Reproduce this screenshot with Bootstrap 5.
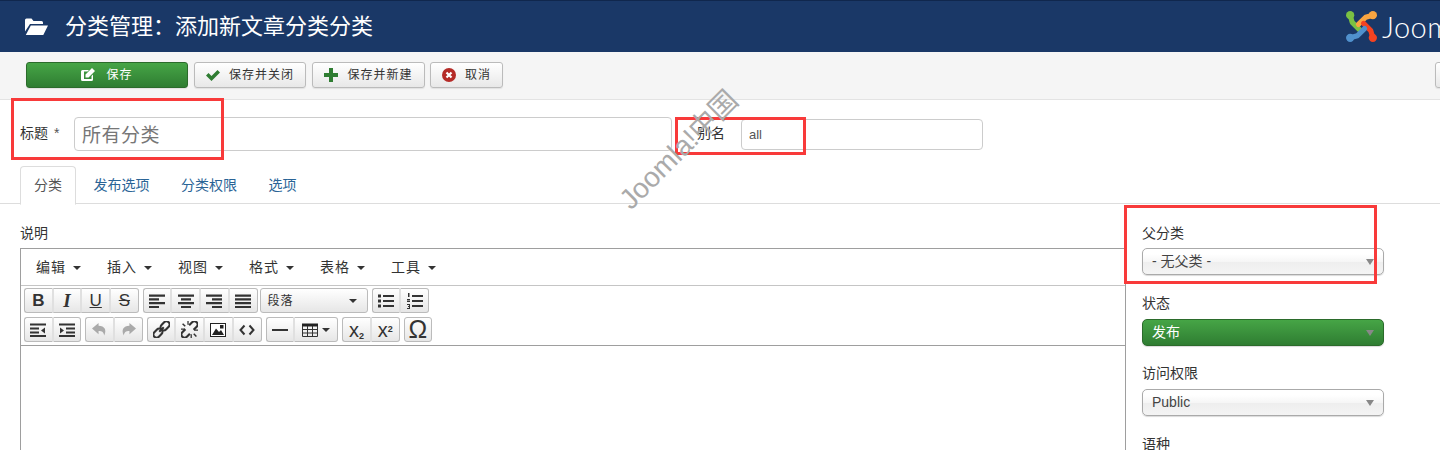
<!DOCTYPE html>
<html lang="zh-CN">
  <head>
    <meta charset="UTF-8" />
    <meta name="viewport" content="width=device-width, initial-scale=1.0" />
    <link rel="stylesheet" href="https://cdn.jsdelivr.net/npm/bootstrap@5.3.0/dist/css/bootstrap.min.css" />
    <title>分类管理</title>
    <style>
      html, body { height: 450px; overflow: hidden; }
      body {
        position: relative;
        font-family: "Liberation Sans", "Noto Sans CJK SC", sans-serif;
        font-size: 14px;
        color: #333;
        background: #fff;
      }
      .top-head { height: 52px; background: #1a3867; border-top: 1px solid #10274d; color: #fff; overflow: hidden; }
      .top-head h1 { font-size: 22px; font-weight: 400; margin: 0 0 0 17px; line-height: 52px; }
      .folder-ico { margin-left: 25px; margin-bottom: 1px; }
      .brand-txt { font-family: Lato, sans-serif; font-weight: 300; font-size: 29px; margin-left: 4px; letter-spacing: .5px; }
      .logo-box { margin-left: auto; width: 95px; flex: none; white-space: nowrap; }
      .tool-row { height: 48px; background: #f5f5f5; border-bottom: 1px solid #e3e3e3; padding: 10px 0 0 26px; overflow: hidden; }
      .tool-btn {
        flex: none; height: 26px; padding: 0; font-size: 12px; letter-spacing: 1px; color: #333;
        display: inline-flex; align-items: center; justify-content: center; gap: 9px;
        background: linear-gradient(#fff, #e8e8e8); border: 1px solid #bbb; border-radius: 3px;
        box-shadow: 0 1px 1px rgba(0,0,0,.08);
      }
      .tool-save { width: 162px; color: #fff; background: linear-gradient(#46a546, #2f7d32); border-color: #2b6b2b; margin-right: 6px; gap: 11px; }
      .tool-close { width: 112px; margin-right: 6px; }
      .tool-new { width: 113px; margin-right: 5px; }
      .tool-cancel { width: 73px; }
      .tool-edge { width: 30px; margin-left: 932px; }
      .title-row { padding: 17px 0 0 20px; height: 51px; }
      .title-lbl { width: 54px; margin-bottom: 2px; }
      .title-lbl i { font-style: normal; color: #555; margin-left: 2px; }
      .title-inp { width: 598px; height: 34px; font-size: 19px; letter-spacing: .5px; padding: 0 7px 2px; border-color: #ccc; border-radius: 4px; color: #777; }
      .alias-lbl { margin-left: 25px; width: 44px; margin-bottom: 2px; }
      .alias-inp { width: 242px; height: 31px; font-size: 13px; padding: 0 7px; border-color: #ccc; border-radius: 4px; color: #555; }
      .tab-bar { margin-top: 15px; padding-left: 20px; height: 38px; border-bottom-color: #ddd; }
      .tab-bar .nav-link { padding: 8px 13px; height: 39px; font-size: 14px; line-height: 20px; color: #2a6496; margin-right: 3.5px; border-radius: 4px 4px 0 0; }
      .tab-bar .nav-link.active { color: #555; border-color: #ddd #ddd #fff; }
      .edit-col { width: 1126px; flex: none; padding: 20px 0 0 20px; }
      .side-col { padding: 20px 0 0 16px; width: 258px; flex: none; }
      .fld-lbl { display: block; margin-bottom: 7px; line-height: 18px; height: 18px; }
      .edit-col .fld-lbl, .side-col .fld-lbl:first-child { margin-bottom: 6px; }
      .editor-box { border: 1px solid #9e9e9e; border-bottom: 0; height: 260px; }
      .menu-row { height: 37px; border-bottom: 1px solid #c5c5c5; padding-left: 15px; }
      .menu-item { width: 71px; line-height: 37px; white-space: nowrap; letter-spacing: 1px; }
      .caret-mark { display: inline-block; border: 4px solid transparent; border-top-color: #333; border-bottom: 0; margin-left: 2px; vertical-align: 2px; }
      .mce-rows { height: 60px; border-bottom: 1px solid #9e9e9e; padding: 2px 0 0 3px; }
      .mce-line { height: 25px; margin-bottom: 4px; gap: 4px; }
      .mce-grp { height: 25px; }
      .mce-grp > .btn {
        width: 28.7px; height: 25px; padding: 0; display: flex; align-items: center; justify-content: center;
        background: linear-gradient(#fff, #e6e6e6); border: 1px solid #bbb; border-radius: 3px; color: #333;
        font-size: 17px; line-height: 1;
      }
      .mce-grp.mce-grp > .btn.btn:not(:first-child) { margin-left: 0; border-left-color: #e0e0e0; }
      .mce-grp > .btn:not(:last-child) { border-right-color: #e0e0e0; }
      .mce-tight { margin-right: -2px; }
      .mce-b { font-weight: 700; }
      .mce-i { font: italic 700 19px "Liberation Serif", serif; }
      .mce-u { text-decoration: underline; }
      .mce-s { text-decoration: line-through; }
      .mce-grp > .mce-format { width: 108px; justify-content: space-between; padding: 0 10px 0 7px; font-size: 12px; letter-spacing: 1px; }
      .mce-grp > .mce-table { width: 44px; gap: 4px; }
      .mce-grp > .mce-x { font-size: 20px; }
      .mce-x sub, .mce-x sup { font-size: 9px; font-weight: 700; }
      .mce-grp > .mce-omega { font-size: 25px; }
      .side-select { display: block; position: relative; height: 27px; margin-bottom: 19px; width: 242px; }
      .side-select::after { content: ""; position: absolute; right: 10px; top: 11px; border: 4px solid transparent; border-top: 6px solid #888; border-bottom: 0; pointer-events: none; }
      .side-select select {
        display: block; width: 100%; height: 27px; padding: 0 9px; font-size: 14px; color: #444;
        appearance: none; border: 1px solid #aaa; border-radius: 5px;
        background: linear-gradient(#fff 20%, #f6f6f6 50%, #eee 52%, #f4f4f4);
        box-shadow: 0 1px 1px rgba(0,0,0,.15);
      }
      .side-select.is-green { margin-bottom: 18px; }
      .side-select.is-green select { color: #fff; background: linear-gradient(#46a546, #2f7d32); border-color: #2b6b2b; }
      .red-mark { position: absolute; border: 3px solid #f83a3a; pointer-events: none; }
      .red-title { left: 11px; top: 98px; width: 213px; height: 62px; }
      .red-alias { left: 675px; top: 117px; width: 131px; height: 38px; }
      .red-parent { left: 1124px; top: 205px; width: 253px; height: 79px; }
      .water-mark {
        position: absolute; left: 679px; top: 150px; transform: translate(-50%, -50%) rotate(-45deg);
        font-size: 28px; color: #aaa; white-space: nowrap; pointer-events: none; line-height: 1;
      }
    </style>
  </head>
  <body>
    <svg width="0" height="0" class="position-absolute">
      <defs>
        <symbol id="al" viewBox="0 0 16 16"><path d="M0 1.500h16v2.200H0zM0 5.300h10v2.200H0zM0 9.100h16v2.200H0zM0 12.900h10v2.200H0z" /></symbol>
        <symbol id="ac" viewBox="0 0 16 16"><path d="M0 1.500h16v2.200H0zM3 5.300h10v2.200H3zM0 9.100h16v2.200H0zM3 12.900h10v2.200H3z" /></symbol>
        <symbol id="ar" viewBox="0 0 16 16"><path d="M0 1.500h16v2.200H0zM6 5.300h10v2.200H6zM0 9.100h16v2.200H0zM6 12.900h10v2.200H6z" /></symbol>
        <symbol id="aj" viewBox="0 0 16 16"><path d="M0 1.500h16v2.200H0zM0 5.300h16v2.200H0zM0 9.100h16v2.200H0zM0 12.900h16v2.200H0z" /></symbol>
        <symbol id="ul" viewBox="0 0 16 16"><path d="M5 2h11v2H5zM5 7h11v2H5zM5 12h11v2H5zM0 1.500h3v3H0zM0 6.500h3v3H0zM0 11.500h3v3H0z" /></symbol>
        <symbol id="ol" viewBox="0 0 16 16"><path d="M5 2h11v2H5zM5 7h11v2H5zM5 12h11v2H5zM1 0h1.500v4H1zM0 6h3v1.500H1.500V8H3v1H0V7.500h1.500V7H0zM0 11h3v5H0v-1h2v-1H1v-1h1v-1H0z" /></symbol>
        <symbol id="od" viewBox="0 0 16 16"><path d="M0 1.500h16v2H0zM0 5.500h9v2H0zM0 9.500h9v2H0zM0 13h16v2H0zM15 5.500v6l-4-3z" /></symbol>
        <symbol id="id" viewBox="0 0 16 16"><path d="M0 1.500h16v2H0zM7 5.500h9v2H7zM7 9.500h9v2H7zM0 13h16v2H0zM1 5.500v6l4-3z" /></symbol>
        <symbol id="un" viewBox="0 0 16 16"><path d="M7 1 0 7l7 6V9.500c4 0 5.500 1.500 6 5 3-6 .5-10.500-6-10.500z" /></symbol>
        <symbol id="re" viewBox="0 0 16 16"><path d="M9 1l7 6-7 6V9.500c-4 0-5.500 1.500-6 5C0 8.500 2.500 4 9 4z" /></symbol>
        <symbol id="lk" viewBox="0 0 16 16"><g fill="none" stroke="currentColor" stroke-width="2" transform="rotate(-45 8 8)"><rect x="-1.500" y="5" width="9.500" height="6" rx="3" /><rect x="8" y="5" width="9.500" height="6" rx="3" /><path d="M5 8h6" /></g></symbol>
        <symbol id="ulk" viewBox="0 0 16 16"><g fill="none" stroke="currentColor" stroke-width="2" transform="rotate(-45 8 8)"><path d="M5.500 5h-4a3 3 0 0 0 0 6h4" /><path d="M10.500 5h4a3 3 0 0 1 0 6h-4" /></g><path d="M1 3l1-1 2.500 2.500-1 1zM11.500 12.500l1-1 2.500 2.500-1 1zM0 7h3.500v1.200H0zM12.500 8h3.500v1.200h-3.500zM6 0h1.200v3.500H6zM9 12.500h1.200V16H9z" /></symbol>
        <symbol id="im" viewBox="0 0 16 16"><path fill="#222" d="M0 1h16v14H0z" /><path fill="#fff" d="M1 2h14v12H1z" /><path fill="#222" d="M2 13l4-6.500 3 3.500 2-2 3 5zM10 3h3.500v3.500H10z" /></symbol>
        <symbol id="cd" viewBox="0 0 16 16"><path fill="none" stroke="currentColor" stroke-width="2" d="M5.500 3.500 1.500 8l4 4.500M10.500 3.500l4 4.500-4 4.500" /></symbol>
        <symbol id="hr" viewBox="0 0 16 16"><path d="M0 7h16v2H0z" /></symbol>
        <symbol id="tb" viewBox="0 0 16 16"><path fill="#222" d="M0 1.500h16v3H0z" /><path fill="none" stroke="#333" d="M.5 4v10.500h15V4M.5 7.500h15M.5 11h15M5.500 4v10.500M10.500 4v10.500" /></symbol>
      </defs>
    </svg>

    <header class="top-head d-flex align-items-center">
      <svg class="folder-ico flex-shrink-0" width="23" height="19" viewBox="0 0 23 18"><path fill="#fff" d="M0 2.500A1.500 1.500 0 0 1 1.500 1h5l2 2.500h8A1.500 1.500 0 0 1 18 5v1.500H5L0 14zM5.800 8H23l-4.700 9.500H0.800z" /></svg>
      <h1>分类管理：添加新文章分类分类</h1>
      <div class="logo-box d-flex align-items-center">
        <svg class="flex-shrink-0" width="33" height="33" viewBox="0 0 32 32">
          <g fill="none" stroke-width="5" stroke-linecap="round" stroke-linejoin="round">
            <path stroke="#7ac143" d="M5 5 7 12 14 19" />
            <path stroke="#f9a541" d="M27 5 20 7 13 14" />
            <path stroke="#f44321" d="M27 27 25 20 18 13" />
            <path stroke="#5091cd" d="M5 27 12 25 19 18" />
          </g>
          <circle cx="5" cy="5" r="4" fill="#7ac143" />
          <circle cx="27" cy="5" r="4" fill="#f9a541" />
          <circle cx="27" cy="27" r="4" fill="#f44321" />
          <circle cx="5" cy="27" r="4" fill="#5091cd" />
        </svg>
        <span class="brand-txt">Joom</span>
      </div>
    </header>

    <div class="tool-row d-flex align-items-start">
      <button type="button" class="btn tool-btn tool-save">
        <svg width="14" height="14" viewBox="0 0 14 14"><path fill="#fff" d="M1.500 2H8L6.500 3.500H3v7.500h7.500V8L12 6.500v5A1.500 1.500 0 0 1 10.500 13h-9A1.500 1.500 0 0 1 0 11.500v-8A1.500 1.500 0 0 1 1.500 2zM11 0l3 3-6.500 6.500H4.500v-3z" /></svg>保存
      </button>
      <button type="button" class="btn tool-btn tool-close">
        <svg width="14" height="12" viewBox="0 0 14 12"><path fill="#2f7d32" d="M0 6.500 2.500 4 5.500 7 11.500 1 14 3.500 5.500 12z" /></svg>保存并关闭
      </button>
      <button type="button" class="btn tool-btn tool-new">
        <svg width="14" height="14" viewBox="0 0 14 14"><path fill="#2f7d32" d="M5 0h4v5h5v4H9v5H5V9H0V5h5z" /></svg>保存并新建
      </button>
      <button type="button" class="btn tool-btn tool-cancel">
        <svg width="14" height="14" viewBox="0 0 14 14"><circle cx="7" cy="7" r="7" fill="#b52b27" /><path stroke="#fff" stroke-width="2.200" d="M4.500 4.500l5 5M9.500 4.500l-5 5" /></svg>取消
      </button>
      <button type="button" class="btn tool-btn tool-edge"></button>
    </div>

    <div class="title-row d-flex align-items-center">
      <label class="title-lbl">标题 <i>*</i></label>
      <input class="form-control title-inp" type="text" value="所有分类" />
      <label class="alias-lbl">别名</label>
      <input class="form-control alias-inp" type="text" value="all" />
    </div>

    <ul class="nav nav-tabs tab-bar">
      <li class="nav-item"><a class="nav-link active" href="#">分类</a></li>
      <li class="nav-item"><a class="nav-link" href="#">发布选项</a></li>
      <li class="nav-item"><a class="nav-link" href="#">分类权限</a></li>
      <li class="nav-item"><a class="nav-link" href="#">选项</a></li>
    </ul>

    <div class="d-flex">
      <div class="edit-col">
        <label class="fld-lbl">说明</label>
        <div class="editor-box">
          <div class="menu-row d-flex">
            <span class="menu-item">编辑 <b class="caret-mark"></b></span>
            <span class="menu-item">插入 <b class="caret-mark"></b></span>
            <span class="menu-item">视图 <b class="caret-mark"></b></span>
            <span class="menu-item">格式 <b class="caret-mark"></b></span>
            <span class="menu-item">表格 <b class="caret-mark"></b></span>
            <span class="menu-item">工具 <b class="caret-mark"></b></span>
          </div>
          <div class="mce-rows">
            <div class="mce-line d-flex">
              <div class="btn-group mce-grp">
                <button class="btn"><span class="mce-b">B</span></button>
                <button class="btn"><span class="mce-i">I</span></button>
                <button class="btn"><span class="mce-u">U</span></button>
                <button class="btn"><span class="mce-s">S</span></button>
              </div>
              <div class="btn-group mce-grp mce-tight">
                <button class="btn"><svg width="16" height="16" fill="currentColor"><use href="#al" /></svg></button>
                <button class="btn"><svg width="16" height="16" fill="currentColor"><use href="#ac" /></svg></button>
                <button class="btn"><svg width="16" height="16" fill="currentColor"><use href="#ar" /></svg></button>
                <button class="btn"><svg width="16" height="16" fill="currentColor"><use href="#aj" /></svg></button>
              </div>
              <div class="btn-group mce-grp">
                <button class="btn mce-format">段落 <b class="caret-mark"></b></button>
              </div>
              <div class="btn-group mce-grp">
                <button class="btn"><svg width="16" height="16" fill="currentColor"><use href="#ul" /></svg></button>
                <button class="btn"><svg width="16" height="16" fill="currentColor"><use href="#ol" /></svg></button>
              </div>
            </div>
            <div class="mce-line d-flex">
              <div class="btn-group mce-grp">
                <button class="btn"><svg width="16" height="16" fill="currentColor"><use href="#od" /></svg></button>
                <button class="btn"><svg width="16" height="16" fill="currentColor"><use href="#id" /></svg></button>
              </div>
              <div class="btn-group mce-grp">
                <button class="btn"><svg width="15" height="15" fill="#aaa"><use href="#un" /></svg></button>
                <button class="btn"><svg width="15" height="15" fill="#aaa"><use href="#re" /></svg></button>
              </div>
              <div class="btn-group mce-grp">
                <button class="btn"><svg width="17" height="17" fill="currentColor"><use href="#lk" /></svg></button>
                <button class="btn"><svg width="17" height="17" fill="currentColor"><use href="#ulk" /></svg></button>
                <button class="btn"><svg width="16" height="16"><use href="#im" /></svg></button>
                <button class="btn"><svg width="16" height="16" fill="currentColor"><use href="#cd" /></svg></button>
              </div>
              <div class="btn-group mce-grp">
                <button class="btn"><svg width="16" height="16" fill="currentColor"><use href="#hr" /></svg></button>
                <button class="btn mce-table"><svg width="16" height="16"><use href="#tb" /></svg><b class="caret-mark m-0"></b></button>
              </div>
              <div class="btn-group mce-grp">
                <button class="btn mce-x"><span>x<sub>2</sub></span></button>
                <button class="btn mce-x"><span>x<sup>2</sup></span></button>
              </div>
              <div class="btn-group mce-grp">
                <button class="btn mce-omega">Ω</button>
              </div>
            </div>
          </div>
        </div>
      </div>
      <div class="side-col">
        <label class="fld-lbl">父分类</label>
        <span class="side-select"><select><option>- 无父类 -</option></select></span>
        <label class="fld-lbl">状态</label>
        <span class="side-select is-green"><select><option>发布</option></select></span>
        <label class="fld-lbl">访问权限</label>
        <span class="side-select"><select><option>Public</option></select></span>
        <label class="fld-lbl">语种</label>
      </div>
    </div>

    <div class="red-mark red-title"></div>
    <div class="red-mark red-alias"></div>
    <div class="red-mark red-parent"></div>
    <div class="water-mark">Joomla!中国</div>

    <script src="https://cdn.jsdelivr.net/npm/bootstrap@5.3.0/dist/js/bootstrap.bundle.min.js"></script>
  </body>
</html>
